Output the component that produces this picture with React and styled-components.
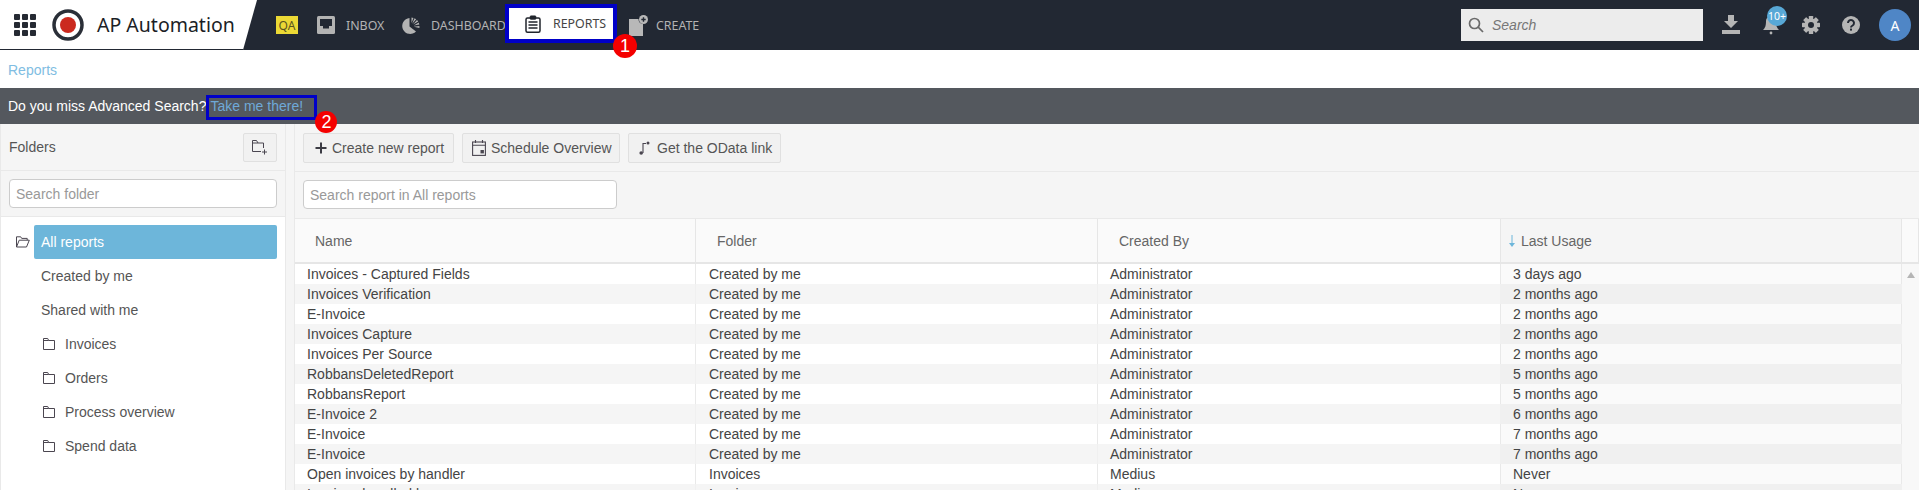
import React from "react";
import styled, { createGlobalStyle } from "styled-components";

const Global = createGlobalStyle`
  html, body { margin: 0; padding: 0; height: 490px; overflow: hidden; background: #fff; }
  body { font-family: "Liberation Sans", Arial, sans-serif; font-size: 14px; color: #444; }
  * { box-sizing: border-box; }
`;

const Page = styled.div`
  width: 1919px; height: 490px; overflow: hidden; display: flex; flex-direction: column;
`;

/* ---------- Header ---------- */
const Header = styled.header`
  height: 50px; flex: none; background: #222833; display: flex; align-items: center;
  font-family: "Noto Sans", "Open Sans", sans-serif;
`;
const Brand = styled.div`
  width: 257px; height: 50px; background: #fff; flex: none; display: flex; align-items: center;
  padding-left: 14px; border-bottom: 1px solid #222833;
  clip-path: polygon(0 0, 100% 0, 243px 100%, 0 100%);
`;
const GridIcon = styled.svg`
  width: 22px; height: 22px; flex: none; margin-right: 16px;
`;
const BrandMark = styled.svg`
  width: 32px; height: 32px; flex: none; margin-right: 13px;
`;
const BrandName = styled.span`
  font-size: 19.5px; color: #1b1e26; white-space: nowrap;
`;
const Nav = styled.nav`
  display: flex; align-items: center; height: 50px; padding-left: 19px;
`;
const QA = styled.span`
  width: 22px; height: 18px; background: #ecd935; color: #5a5420; font-size: 12px;
  display: flex; align-items: center; justify-content: center; margin-right: 19px;
`;
const NavItem = styled.a`
  display: flex; align-items: center; color: #b3b3b3; font-size: 12.4px; white-space: nowrap;
  width: ${p => p.$w}px; flex: none;
  svg { flex: none; margin-right: ${p => p.$gap}px; }
`;
const ActiveItem = styled.a`
  position: relative; display: flex; align-items: center; height: 39px; width: 112px; flex: none;
  margin: 0 12px 3px 0; padding-left: 20px; background: #fff; color: #444; font-size: 12.4px;
  border: 4px solid #0000c8;
  svg { flex: none; margin-right: 12px; margin-left: -4px; }
`;
const Marker = styled.span`
  position: absolute; width: ${p => p.$s || 24}px; height: ${p => p.$s || 24}px; border-radius: 50%;
  background: #f40000; color: #fff; font: 400 18px/${p => p.$s || 24}px "Liberation Sans", sans-serif; text-align: center;
  left: ${p => p.$x}px; top: ${p => p.$y}px; z-index: 3;
`;
const HeaderRight = styled.div`
  margin-left: auto; display: flex; align-items: center; height: 50px; padding-right: 8px;
`;
const GlobalSearch = styled.div`
  width: 242px; height: 32px; background: #ececec; display: flex; align-items: center;
  padding-left: 7px; margin-right: 8px;
  svg { flex: none; margin-right: 8px; }
  span { font: italic 14px "Liberation Sans", sans-serif; color: #777; }
`;
const IconSlot = styled.div`
  position: relative; width: 40px; height: 50px; display: flex; align-items: center; justify-content: center;
`;
const CountBadge = styled.span`
  position: absolute; left: 16px; top: 6px; width: 20px; height: 20px; border-radius: 50%;
  background: #58a8d6; color: #fff; font-size: 10.5px; line-height: 20px; text-align: center;
`;
const Avatar = styled.div`
  width: 32px; height: 32px; border-radius: 50%; background: #4f86c6; color: #fff; font-size: 14px;
  display: flex; align-items: center; justify-content: center; margin-left: 8px;
`;

/* ---------- Breadcrumb + banner ---------- */
const Breadcrumb = styled.div`
  height: 38px; flex: none; padding: 1px 8px 0; display: flex; align-items: center; color: #80bde2;
`;
const Banner = styled.div`
  height: 36px; flex: none; background: #54585e; color: #fff; padding: 0 8px; display: flex; align-items: center;
`;
const LinkBox = styled.a`
  position: relative; display: flex; align-items: center; width: 111px; height: 25px;
  border: 3px solid #0000c8; color: #6fa9d8; padding-left: 1px; white-space: nowrap; margin: 2px 0 0 0;
  line-height: 1; padding-bottom: 3px;
`;

/* ---------- Body ---------- */
const Body = styled.div`
  flex: 1; min-height: 0; display: flex; background: #f5f5f5;
`;
const Sidebar = styled.aside`
  width: 286px; flex: none; background: #fff; border-left: 1px solid #e9e9e9; border-right: 1px solid #e9e9e9;
  display: flex; flex-direction: column;
`;
const SideHeader = styled.div`
  height: 47px; flex: none; background: #f5f5f5; border-bottom: 1px solid #e9e9e9; display: flex;
  align-items: center; justify-content: space-between; padding: 0 8px 0 8px; color: #555;
`;
const IconButton = styled.button`
  width: 34px; height: 29px; background: #f1f1f1; border: 1px solid #e0e0e0; border-radius: 2px; padding: 0;
  display: flex; align-items: center; justify-content: center;
`;
const SideSearch = styled.div`
  height: 46px; flex: none; background: #f5f5f5; border-bottom: 1px solid #e9e9e9; padding: 8px 8px 0;
`;
const TextInput = styled.div`
  width: ${p => p.$w}; height: 29px; background: #fff; border: 1px solid #ccc; border-radius: 4px;
  color: #999; padding: 0 6px; display: flex; align-items: center;
`;
const Tree = styled.ul`
  list-style: none; margin: 0; padding: 8px 8px 0 0;
`;
const TreeRow = styled.li`
  height: 34px; display: flex; align-items: center; color: #555;
  padding-left: ${p => p.$folder ? 42 : 33}px;
  svg { flex: none; margin-right: 10px; }
`;
const RootRow = styled(TreeRow)`
  padding-left: 15px;
  svg { margin-right: 4px; }
`;
const ActiveLabel = styled.span`
  flex: 1; height: 34px; background: #6db6da; color: #fff; border-radius: 2px; display: flex; align-items: center;
  padding-left: 7px;
`;
const PlainLabel = styled.span`
  padding-left: 7px;
`;

const Main = styled.main`
  flex: 1; min-width: 0; border-left: 1px solid #e9e9e9; margin-left: 8px; display: flex; flex-direction: column;
`;
const Toolbar = styled.div`
  height: 48px; flex: none; border-bottom: 1px solid #e9e9e9; display: flex; align-items: flex-start; gap: 8px; padding: 9px 0 0 8px;
`;
const ToolButton = styled.button`
  height: 30px; width: ${p => p.$w}px; background: #f1f1f1; border: 1px solid #e0e0e0; border-radius: 2px; color: #555;
  font: 14px "Liberation Sans", sans-serif; display: flex; align-items: center; padding: 0 0 0 ${p => p.$pad}px;
  white-space: nowrap; flex: none;
  svg { flex: none; margin-right: ${p => p.$gap}px; }
`;
const SearchBar = styled.div`
  height: 47px; flex: none; padding: 8px 0 0 8px; border-bottom: 1px solid #e9e9e9;
`;

const Table = styled.div`
  flex: 1; min-height: 0; display: grid; background: #fff; overflow: hidden;
  grid-template-columns: 401px 402px 403px 401px 17px; grid-auto-rows: 20px; grid-template-rows: 45px;
`;
const Th = styled.div`
  height: 45px; background: ${p => p.$sorted ? "#f5f5f5" : "#fafafa"}; border-right: 1px solid #e6e6e6; border-bottom: 2px solid #e6e6e6;
  display: flex; align-items: center; color: #666; padding-left: ${p => p.$pad}px;
`;
const SortArrow = styled.svg`
  flex: none; margin-right: 5px;
`;
const Td = styled.div`
  height: 20px; line-height: 20px; padding-left: ${p => p.$pad}px; white-space: nowrap; overflow: hidden; color: #444;
  background: ${p => p.$sorted ? (p.$alt ? "#f0f0f0" : "#fafafa") : (p.$alt ? "#f5f5f5" : "#fff")};
  border-right: 1px solid ${p => p.$alt ? "#f0f0f0" : "#e9e9e9"};
`;
const Scroll = styled.div`
  grid-row: 2 / span 13; grid-column: 5; background: #f8f8f8; display: flex; justify-content: center; padding-top: 8px;
`;

/* ---------- Icons ---------- */
const Apps = () => (
  <GridIcon viewBox="0 0 22 22" fill="#262a33">
    {[0, 8, 16].flatMap(y => [0, 8, 16].map(x => <rect key={x + "-" + y} x={x} y={y} width="6" height="6" rx="1" />))}
  </GridIcon>
);
const Mark = () => (
  <BrandMark viewBox="0 0 32 32">
    <circle cx="16" cy="16" r="14" fill="#fff" stroke="#2a2f38" strokeWidth="3.5" />
    <circle cx="16" cy="16" r="8" fill="#cb2a1f" />
  </BrandMark>
);
const InboxIcon = () => (
  <svg width="18" height="18" viewBox="0 0 18 18">
    <rect width="18" height="18" rx="1.5" fill="#b3b3b3" />
    <path d="M3 3h12v7h-3v2.5H6V10H3z" fill="#222833" />
  </svg>
);
const DashIcon = () => (
  <svg width="18" height="18" viewBox="0 0 18 18" fill="#b3b3b3">
    <path d="M7.5 2v8.5l6.5 5A8 8 0 1 1 7.5 2z" />
    <path d="M9.5 1.5a8 8 0 0 1 2 .4L9.5 7zM12.5 2.3l1.7 1-4 4.4zM15 4l1.2 1.5-5.2 3zM16.7 6.5l.7 2-5.6.9zM17.4 10v2l-5.5-1.2z" />
  </svg>
);
const ClipIcon = () => (
  <svg width="16" height="18" viewBox="0 0 16 18" fill="none" stroke="#20242c">
    <rect x="1" y="3" width="14" height="14.2" rx="1.5" strokeWidth="1.5" />
    <rect x="5" y="0.8" width="6" height="3.6" rx="1" fill="#20242c" strokeWidth="0.5" />
    <path d="M3.5 7h9M3.5 10h9M3.5 13h9" strokeWidth="1.5" />
  </svg>
);
const CreateIcon = () => (
  <svg width="19" height="21" viewBox="0 0 19 21">
    <path d="M0 4h9.5a5 5 0 0 0 4.5 5v12H0z" fill="#b8b8b8" />
    <circle cx="14.5" cy="4.5" r="4.5" fill="#b8b8b8" />
    <path d="M12.3 4.5h4.4M14.5 2.3v4.4" stroke="#222833" strokeWidth="1.4" />
  </svg>
);
const Magnifier = () => (
  <svg width="16" height="16" viewBox="0 0 16 16" fill="none" stroke="#6b6b6b" strokeWidth="1.7">
    <circle cx="6.5" cy="6.5" r="5" />
    <path d="M10.2 10.2 15 15" />
  </svg>
);
const Download = () => (
  <svg width="18" height="20" viewBox="0 0 18 20" fill="#b5b5b5">
    <path d="M6 0h6v6h4l-7 7-7-7h4z" />
    <rect y="15" width="18" height="4" />
  </svg>
);
const Bell = () => (
  <svg width="16" height="20" viewBox="0 0 16 20" fill="#b5b5b5">
    <path d="M8 1a5 5 0 0 1 5 5c0 5 1 7 3 9H0c2-2 3-4 3-9a5 5 0 0 1 5-5z" />
    <circle cx="8" cy="18" r="1.4" />
  </svg>
);
const Gear = () => (
  <svg width="18" height="18" viewBox="0 0 18 18">
    <g fill="#b5b5b5">
      {[0, 45, 90, 135].map(a => <rect key={a} x="6.8" y="0" width="4.4" height="18" rx="0.6" transform={`rotate(${a} 9 9)`} />)}
      <circle cx="9" cy="9" r="6.6" />
    </g>
    <circle cx="9" cy="9" r="3" fill="#222833" />
  </svg>
);
const Help = () => (
  <svg width="18" height="18" viewBox="0 0 18 18">
    <circle cx="9" cy="9" r="9" fill="#b5b5b5" />
    <path d="M6 7a3 3 0 1 1 4.6 2.5C9.6 10.1 9 10.5 9 11.5" fill="none" stroke="#222833" strokeWidth="2" />
    <rect x="8" y="12.6" width="2" height="2" fill="#222833" />
  </svg>
);
const FolderPlus = () => (
  <svg width="16" height="15" viewBox="0 0 16 15" fill="none" stroke="#4a4650" strokeWidth="1">
    <path d="M.5 11.5V.5h4l1.5 2.5h5.5v5M9 11.5H.5M.5 3H6" />
    <path d="M12.5 9.5v5M10 12h5" />
  </svg>
);
const Plus = () => (
  <svg width="12" height="12" viewBox="0 0 12 12" stroke="#3c3c44" strokeWidth="2"><path d="M6 .5v11M.5 6h11" /></svg>
);
const Calendar = () => (
  <svg width="14" height="16" viewBox="0 0 14 16" fill="none" stroke="#4a4650" strokeWidth="1.1">
    <rect x=".6" y="2" width="12.8" height="13.4" />
    <path d="M.6 5.2h12.8M3.5 0v3M10.5 0v3" />
    <rect x="8.5" y="10" width="3.4" height="3.4" fill="#4a4650" stroke="none" />
  </svg>
);
const Odata = () => (
  <svg width="11" height="14" viewBox="0 0 11 14" fill="none" stroke="#4a4650" strokeWidth="1.1">
    <path d="M4 12V2.5h3" />
    <circle cx="2.2" cy="12" r="1.8" fill="#4a4650" stroke="none" />
    <circle cx="9" cy="2" r="1.5" fill="#4a4650" stroke="none" />
  </svg>
);
const FolderOpen = () => (
  <svg width="14" height="12" viewBox="0 0 14 12" fill="none" stroke="#4b4650" strokeWidth="1">
    <path d="M.5 11V.8h4.2l1 1.6h5.5v1.8M.5 11h10l2.8-6.8H3.2z" />
  </svg>
);
const Folder = () => (
  <svg width="12" height="12" viewBox="0 0 12 12" fill="none" stroke="#4b4650" strokeWidth="1">
    <path d="M.5 11.5V.5h4.2l1 2h5.8v9zM.5 2.5h5.2" />
  </svg>
);

const rows = [
  ["Invoices - Captured Fields", "Created by me", "Administrator", "3 days ago"],
  ["Invoices Verification", "Created by me", "Administrator", "2 months ago"],
  ["E-Invoice", "Created by me", "Administrator", "2 months ago"],
  ["Invoices Capture", "Created by me", "Administrator", "2 months ago"],
  ["Invoices Per Source", "Created by me", "Administrator", "2 months ago"],
  ["RobbansDeletedReport", "Created by me", "Administrator", "5 months ago"],
  ["RobbansReport", "Created by me", "Administrator", "5 months ago"],
  ["E-Invoice 2", "Created by me", "Administrator", "6 months ago"],
  ["E-Invoice", "Created by me", "Administrator", "7 months ago"],
  ["E-Invoice", "Created by me", "Administrator", "7 months ago"],
  ["Open invoices by handler", "Invoices", "Medius", "Never"],
  ["Invoices handled by", "Invoices", "Medius", "Never"],
];
const folders = ["Invoices", "Orders", "Process overview", "Spend data"];

export default function App() {
  return (
    <Page>
      <Global />
      <Header>
        <Brand>
          <Apps />
          <Mark />
          <BrandName>AP Automation</BrandName>
        </Brand>
        <Nav>
          <QA>QA</QA>
          <NavItem $w={85} $gap={11}><InboxIcon />INBOX</NavItem>
          <NavItem $w={103} $gap={11}><DashIcon />DASHBOARD</NavItem>
          <ActiveItem>
            <ClipIcon />REPORTS
            <Marker $x={104} $y={26}>1</Marker>
          </ActiveItem>
          <NavItem $w={80} $gap={8}><CreateIcon />CREATE</NavItem>
        </Nav>
        <HeaderRight>
          <GlobalSearch><Magnifier /><span>Search</span></GlobalSearch>
          <IconSlot><Download /></IconSlot>
          <IconSlot><Bell /><CountBadge>10+</CountBadge></IconSlot>
          <IconSlot><Gear /></IconSlot>
          <IconSlot><Help /></IconSlot>
          <Avatar>A</Avatar>
        </HeaderRight>
      </Header>
      <Breadcrumb>Reports</Breadcrumb>
      <Banner>
        Do you miss Advanced Search?
        <LinkBox>
          Take me there!
          <Marker $x={106} $y={13} $s={22}>2</Marker>
        </LinkBox>
      </Banner>
      <Body>
        <Sidebar>
          <SideHeader>Folders<IconButton><FolderPlus /></IconButton></SideHeader>
          <SideSearch><TextInput $w="100%">Search folder</TextInput></SideSearch>
          <Tree>
            <RootRow><FolderOpen /><ActiveLabel>All reports</ActiveLabel></RootRow>
            <TreeRow><PlainLabel>Created by me</PlainLabel></TreeRow>
            <TreeRow><PlainLabel>Shared with me</PlainLabel></TreeRow>
            {folders.map(f => <TreeRow key={f} $folder><Folder />{f}</TreeRow>)}
          </Tree>
        </Sidebar>
        <Main>
          <Toolbar>
            <ToolButton $w={151} $pad={11} $gap={5}><Plus />Create new report</ToolButton>
            <ToolButton $w={158} $pad={9} $gap={5}><Calendar />Schedule Overview</ToolButton>
            <ToolButton $w={153} $pad={10} $gap={7}><Odata />Get the OData link</ToolButton>
          </Toolbar>
          <SearchBar><TextInput $w="314px">Search report in All reports</TextInput></SearchBar>
          <Table>
            <Th $pad={20}>Name</Th>
            <Th $pad={21}>Folder</Th>
            <Th $pad={21}>Created By</Th>
            <Th $pad={7} $sorted>
              <SortArrow width="8" height="12" viewBox="0 0 8 12"><path d="M4 0v9" stroke="#6db6da" strokeWidth="1" /><path d="M1 8h6l-3 4z" fill="#6db6da" /></SortArrow>
              Last Usage
            </Th>
            <Th />
            {rows.map((r, i) => (
              <React.Fragment key={i}>
                <Td $pad={12} $alt={i % 2 === 1}>{r[0]}</Td>
                <Td $pad={13} $alt={i % 2 === 1}>{r[1]}</Td>
                <Td $pad={12} $alt={i % 2 === 1}>{r[2]}</Td>
                <Td $pad={12} $alt={i % 2 === 1} $sorted>{r[3]}</Td>
                {i === 0 && (
                  <Scroll>
                    <svg width="8" height="6" viewBox="0 0 8 6"><path d="M4 0l4 6H0z" fill="#b5b5b5" /></svg>
                  </Scroll>
                )}
              </React.Fragment>
            ))}
          </Table>
        </Main>
      </Body>
    </Page>
  );
}
